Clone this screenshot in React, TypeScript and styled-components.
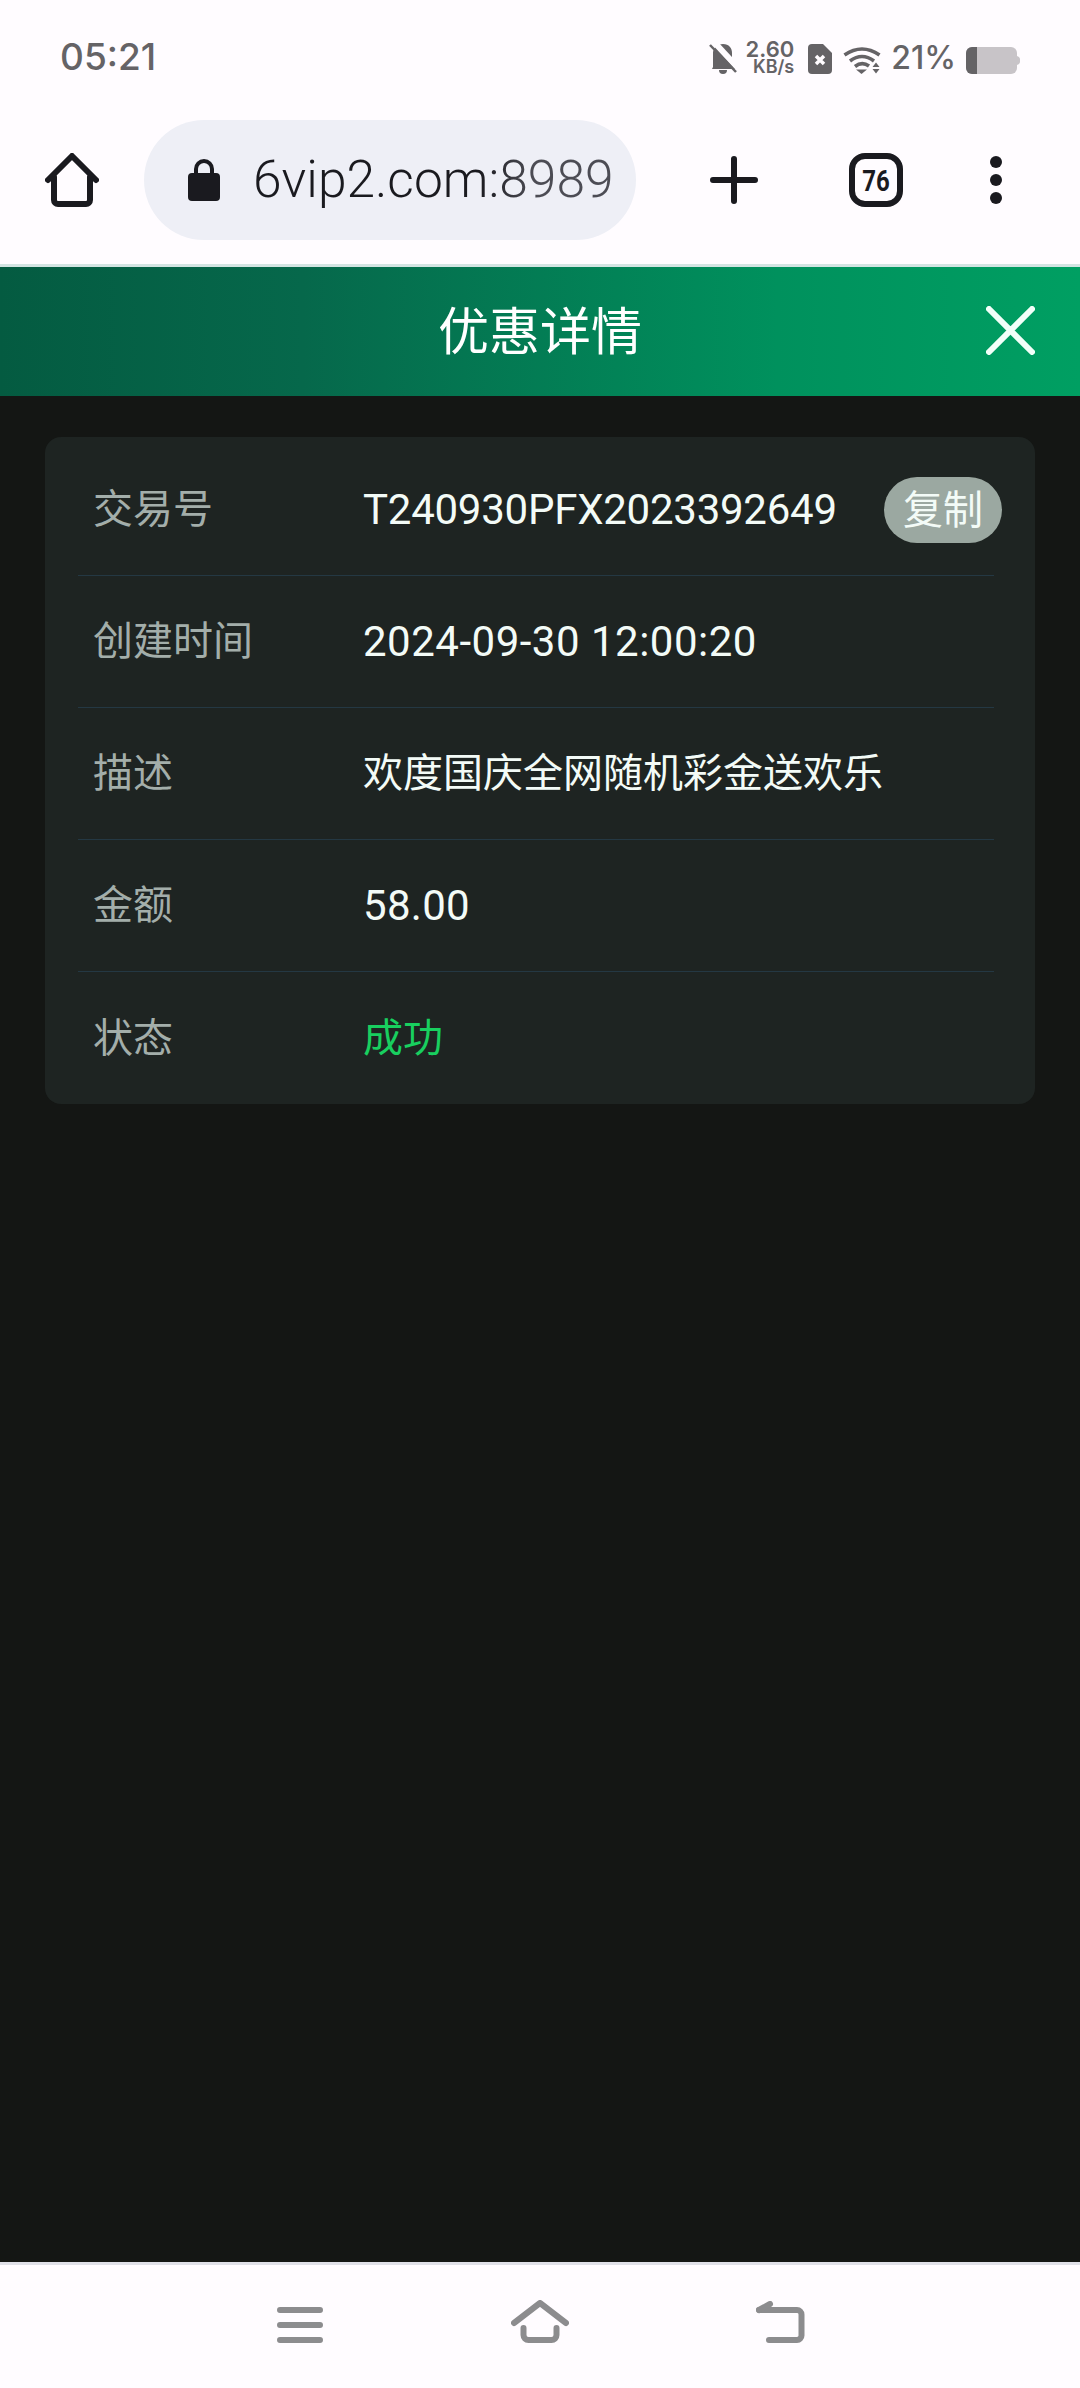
import { createGlobalStyle, styled } from 'styled-components';

const Global = createGlobalStyle`
  html, body {
    margin: 0;
    padding: 0;
    background: #141614;
  }
  * {
    box-sizing: border-box;
  }
`;

const sans = `Roboto, "Noto Sans CJK SC", sans-serif`;
const cjk = `"Noto Sans CJK SC", sans-serif`;

const Page = styled.div`
  width: 1080px;
  height: 2388px;
  display: flex;
  flex-direction: column;
  background: #141614;
  font-family: ${sans};
`;

const StatusBar = styled.div`
  height: 120px;
  padding: 0 60px 0 60px;
  display: flex;
  justify-content: space-between;
  align-items: flex-start;
  background: #fffcff;
  color: #656366;
`;

const Clock = styled.div`
  margin-top: 36px;
  font-family: Inter, sans-serif;
  font-size: 37px;
  line-height: 42px;
  font-weight: 500;
`;

const StatusIcons = styled.div`
  margin-top: 40px;
  display: flex;
  align-items: flex-end;
  height: 34px;
`;

const Speed = styled.div`
  width: 46px;
  margin: 0 14px 0 11px;
  display: flex;
  flex-direction: column;
  align-items: flex-end;
  font-family: Inter, sans-serif;
  font-weight: 600;
  white-space: nowrap;
`;

const SpeedTop = styled.div`
  font-size: 22px;
  line-height: 19px;
`;

const SpeedBottom = styled.div`
  font-size: 18px;
  line-height: 15px;
`;

const Percent = styled.div`
  margin: 0 10px 0 10px;
  font-family: Inter, sans-serif;
  font-size: 32px;
  line-height: 32px;
  font-weight: 500;
`;

const BrowserBar = styled.div`
  height: 147px;
  padding: 0 0 24px 0;
  display: flex;
  align-items: center;
  background: #fffcff;
  border-bottom: 3px solid #d3e4e2;
`;

const IconSlot = styled.div<{ $w: number }>`
  width: ${(p) => p.$w}px;
  flex: none;
  display: flex;
  justify-content: center;
  align-items: center;
`;

const UrlPill = styled.div`
  width: 492px;
  height: 120px;
  flex: none;
  border-radius: 60px;
  background: #eeeff6;
  display: flex;
  align-items: center;
  padding-left: 44px;
`;

const UrlText = styled.div`
  margin-left: 33px;
  font-size: 51.5px;
  line-height: 60px;
  font-weight: 300;
  white-space: nowrap;
  background: linear-gradient(90deg, #1a1a1f 0, #1a1a1f 225px, #4c4c54 280px);
  -webkit-background-clip: text;
  background-clip: text;
  color: transparent;
`;

const Header = styled.div`
  height: 129px;
  flex: none;
  display: flex;
  align-items: center;
  justify-content: center;
  position: relative;
  padding-bottom: 8px;
  background: linear-gradient(90deg, #045b41 0%, #06684b 28%, #00915d 72%, #009f62 100%);
`;

const Title = styled.div`
  color: #fff;
  font-family: ${cjk};
  font-size: 51px;
  font-weight: 400;
`;

const CloseButton = styled.div`
  position: absolute;
  right: 45px;
  top: 39px;
  width: 49px;
  height: 49px;
`;

const Content = styled.div`
  flex: 1;
  padding: 41px 45px 0;
`;

const Card = styled.div`
  background: #1e2422;
  border-radius: 16px;
  padding: 7px 41px 0 33px;
`;

const Row = styled.div<{ $last?: boolean }>`
  height: 132px;
  display: flex;
  align-items: center;
  padding: 0 0 0 15px;
  border-bottom: ${(p) => (p.$last ? 'none' : '1px solid #243843')};
`;

const Label = styled.div`
  width: 270px;
  flex: none;
  padding-bottom: 7px;
  color: #a3aeaa;
  font-family: ${cjk};
  font-size: 40px;
  font-weight: 400;
`;

const Value = styled.div<{ $color?: string; $cjk?: boolean; $track?: number }>`
  flex: 1;
  color: ${(p) => p.$color ?? '#f3fbf7'};
  font-family: ${(p) => (p.$cjk ? cjk : sans)};
  font-size: ${(p) => (p.$cjk ? 40 : 42)}px;
  font-weight: 400;
  letter-spacing: ${(p) => p.$track ?? 0}px;
  white-space: nowrap;
  padding-bottom: ${(p) => (p.$cjk ? 7 : 1)}px;
`;

const CopyButton = styled.div`
  width: 118px;
  height: 66px;
  flex: none;
  margin-right: -8px;
  padding-bottom: 6px;
  border-radius: 33px;
  background: #9ba8a1;
  color: #f3fbf7;
  font-family: ${cjk};
  font-size: 40px;
  font-weight: 400;
  display: flex;
  align-items: center;
  justify-content: center;
`;

const NavBar = styled.div`
  height: 126px;
  flex: none;
  background: #fffcff;
  border-top: 3px solid #e0e0e8;
  display: flex;
  justify-content: center;
  align-items: flex-start;
  padding-top: 35px;
`;

const NavSlot = styled.div`
  width: 240px;
  height: 43px;
  display: flex;
  justify-content: center;
  align-items: flex-end;
`;

const rows = [
  { label: '创建时间', value: '2024-09-30 12:00:20', track: 0.5 },
  { label: '描述', value: '欢度国庆全网随机彩金送欢乐', cjk: true },
  { label: '金额', value: '58.00', track: 0.3 },
];

export default function App() {
  return (
    <Page>
      <Global />
      <StatusBar>
        <Clock>05:21</Clock>
        <StatusIcons>
          <svg width="28" height="31" viewBox="0 0 28 31">
            <path d="M14 1c6 0 9 4 9 9v9l4 6v1H3l1-2V9c1-5 5-8 10-8z" fill="#656366" />
            <path d="M10 27a4 4 0 0 0 8 0z" fill="#656366" />
            <path d="M3 1l25 27" stroke="#fffcff" strokeWidth="6" transform="translate(2 -2)" />
            <path d="M1 2l26 27" stroke="#656366" strokeWidth="2.5" />
            <path d="M0 10l3 3v12H0z" fill="#fffcff" />
          </svg>
          <Speed>
            <SpeedTop>2.60</SpeedTop>
            <SpeedBottom>KB/s</SpeedBottom>
          </Speed>
          <svg width="24" height="30" viewBox="0 0 24 30">
            <path d="M4 0h11l9 9v17a4 4 0 0 1-4 4H4a4 4 0 0 1-4-4V4a4 4 0 0 1 4-4z" fill="#656366" />
            <path d="M8 12l8 8M16 12l-8 8" stroke="#fffcff" strokeWidth="3.5" />
          </svg>
          <svg width="38" height="28" viewBox="0 0 38 28" style={{ marginLeft: 11 }}>
            <path d="M1.5 9Q19-3 36.5 9" fill="none" stroke="#656366" strokeWidth="3.6" />
            <path d="M7 15Q19 6 31 15" fill="none" stroke="#656366" strokeWidth="3.6" />
            <path d="M12 20.500Q19 15 26 20" fill="none" stroke="#656366" strokeWidth="3.6" />
            <path d="M13 23.500h11l-5.500 4.500z" fill="#656366" />
            <path d="M29.500 21h7l-3.500-4.500zM29.500 23h7l-3.500 4.500z" fill="#656366" />
          </svg>
          <Percent>21%</Percent>
          <svg width="54" height="27" viewBox="0 0 54 27">
            <rect x="0" y="0" width="51" height="27" rx="6" fill="#c8c4c8" />
            <path d="M6 0h5v27H6a6 6 0 0 1-6-6V6a6 6 0 0 1 6-6z" fill="#656366" />
            <path d="M51 9a4 4 0 0 1 3 4.500A4 4 0 0 1 51 18z" fill="#c8c4c8" />
          </svg>
        </StatusIcons>
      </StatusBar>

      <BrowserBar>
        <IconSlot $w={144}>
          <svg width="54" height="54" viewBox="0 0 54 54">
            <path
              d="M3 27L27 3l24 24M9 24v23a4 4 0 0 0 4 4h28a4 4 0 0 0 4-4V24"
              fill="none"
              stroke="#1a1a1f"
              strokeWidth="6"
              strokeLinecap="round"
              strokeLinejoin="round"
            />
          </svg>
        </IconSlot>
        <UrlPill>
          <svg width="32" height="42" viewBox="0 0 32 42">
            <path d="M8 16V10a8 8 0 0 1 16 0v6" fill="none" stroke="#1a1a1f" strokeWidth="4" />
            <rect x="0" y="14" width="32" height="28" rx="4" fill="#1a1a1f" />
          </svg>
          <UrlText>6vip2.com:8989</UrlText>
        </UrlPill>
        <IconSlot $w={195}>
          <svg width="48" height="48" viewBox="0 0 48 48">
            <path d="M24 3v42M3 24h42" stroke="#1a1a1f" strokeWidth="6" strokeLinecap="round" />
          </svg>
        </IconSlot>
        <IconSlot $w={90}>
          <svg width="54" height="54" viewBox="0 0 54 54">
            <rect x="3" y="3" width="48" height="48" rx="13" fill="none" stroke="#1a1a1f" strokeWidth="6" />
            <text
              x="33.750"
              y="38"
              textAnchor="middle"
              transform="scale(0.8 1)"
              fontFamily="Roboto, sans-serif"
              fontSize="30"
              fontWeight="700"
              fill="#1a1a1f"
            >
              76
            </text>
          </svg>
        </IconSlot>
        <IconSlot $w={150}>
          <svg width="12" height="48" viewBox="0 0 12 48">
            <circle cx="6" cy="6" r="6" fill="#1a1a1f" />
            <circle cx="6" cy="24" r="6" fill="#1a1a1f" />
            <circle cx="6" cy="42" r="6" fill="#1a1a1f" />
          </svg>
        </IconSlot>
      </BrowserBar>

      <Header>
        <Title>优惠详情</Title>
        <CloseButton>
          <svg width="49" height="49" viewBox="0 0 49 49">
            <path d="M3 3l43 43M46 3L3 46" stroke="#f2fff9" strokeWidth="6" strokeLinecap="round" />
          </svg>
        </CloseButton>
      </Header>

      <Content>
        <Card>
          <Row>
            <Label>交易号</Label>
            <Value $track={-0.25}>T240930PFX2023392649</Value>
            <CopyButton>复制</CopyButton>
          </Row>
          {rows.map((r) => (
            <Row key={r.label}>
              <Label>{r.label}</Label>
              <Value $cjk={r.cjk} $track={r.track}>
                {r.value}
              </Value>
            </Row>
          ))}
          <Row $last>
            <Label>状态</Label>
            <Value $cjk $color="#18cf5f">
              成功
            </Value>
          </Row>
        </Card>
      </Content>

      <NavBar>
        <NavSlot>
          <svg width="46" height="36" viewBox="0 0 46 36">
            <path d="M3 3h40M3 18h40M3 33h40" stroke="#8c8c8e" strokeWidth="6" strokeLinecap="round" />
          </svg>
        </NavSlot>
        <NavSlot>
          <svg width="58" height="43" viewBox="0 0 58 43">
            <path d="M3 23L29 3l26 20" fill="none" stroke="#8c8c8e" strokeWidth="6" strokeLinecap="round" strokeLinejoin="round" />
            <path d="M12.500 28v7a5 5 0 0 0 5 5h23a5 5 0 0 0 5-5v-7" fill="none" stroke="#8c8c8e" strokeWidth="6" strokeLinecap="round" />
          </svg>
        </NavSlot>
        <NavSlot>
          <svg width="49" height="42" viewBox="0 0 49 42">
            <path d="M3 9h38a4.500 4.500 0 0 1 4.500 4.500v21a4.500 4.500 0 0 1-4.500 4.500H13" fill="none" stroke="#8c8c8e" strokeWidth="6" strokeLinecap="round" />
            <path d="M3 9l11-6" fill="none" stroke="#8c8c8e" strokeWidth="6" strokeLinecap="round" />
          </svg>
        </NavSlot>
      </NavBar>
    </Page>
  );
}
